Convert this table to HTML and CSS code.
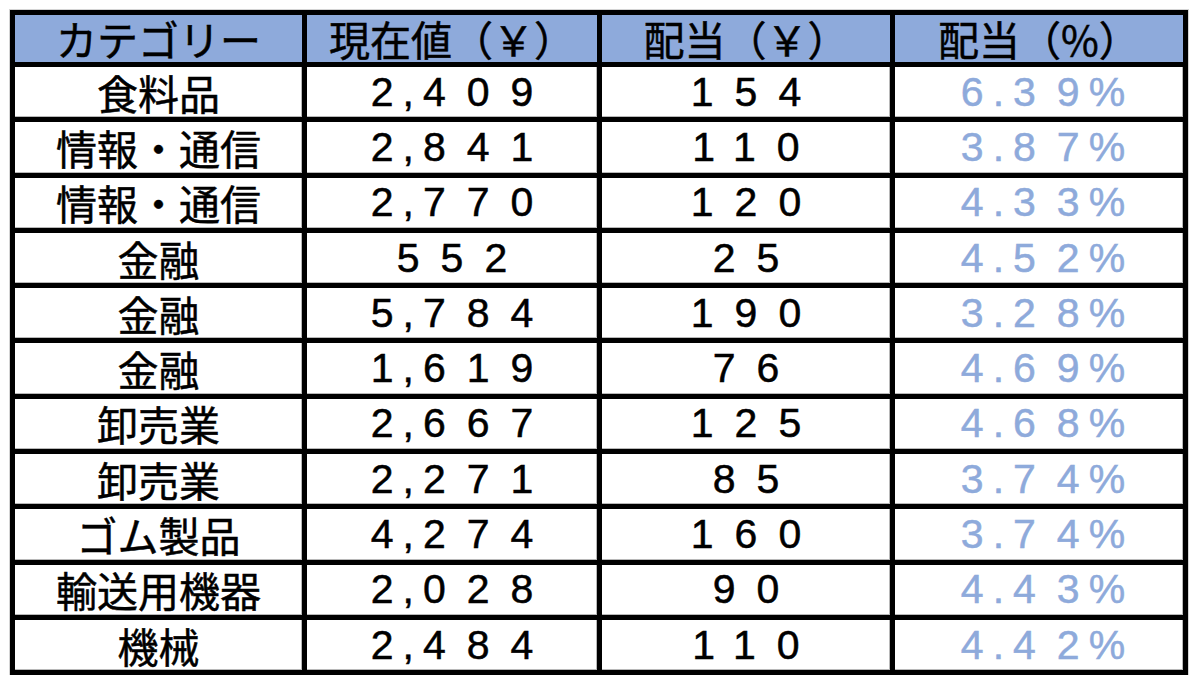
FILE: index.html
```html
<!DOCTYPE html>
<html lang="ja">
<head>
<meta charset="utf-8">
<title>配当一覧</title>
<link rel="stylesheet" href="styles.css">
</head>
<body>
<div class="sheet">
  <div class="cell head">カテゴリー</div>
  <div class="cell head">現在値（￥）</div>
  <div class="cell head">配当（￥）</div>
  <div class="cell head">配当（%）</div>

  <div class="cell cat">食料品</div>
  <div class="cell"><span class="num"><span class="t">2,</span>409</span></div>
  <div class="cell"><span class="num">154</span></div>
  <div class="cell pct"><span class="num"><span class="t">6.</span>3<span class="t">9</span>%</span></div>

  <div class="cell cat">情報・通信</div>
  <div class="cell"><span class="num"><span class="t">2,</span>841</span></div>
  <div class="cell"><span class="num">110</span></div>
  <div class="cell pct"><span class="num"><span class="t">3.</span>8<span class="t">7</span>%</span></div>

  <div class="cell cat">情報・通信</div>
  <div class="cell"><span class="num"><span class="t">2,</span>770</span></div>
  <div class="cell"><span class="num">120</span></div>
  <div class="cell pct"><span class="num"><span class="t">4.</span>3<span class="t">3</span>%</span></div>

  <div class="cell cat">金融</div>
  <div class="cell"><span class="num">552</span></div>
  <div class="cell"><span class="num">25</span></div>
  <div class="cell pct"><span class="num"><span class="t">4.</span>5<span class="t">2</span>%</span></div>

  <div class="cell cat">金融</div>
  <div class="cell"><span class="num"><span class="t">5,</span>784</span></div>
  <div class="cell"><span class="num">190</span></div>
  <div class="cell pct"><span class="num"><span class="t">3.</span>2<span class="t">8</span>%</span></div>

  <div class="cell cat">金融</div>
  <div class="cell"><span class="num"><span class="t">1,</span>619</span></div>
  <div class="cell"><span class="num">76</span></div>
  <div class="cell pct"><span class="num"><span class="t">4.</span>6<span class="t">9</span>%</span></div>

  <div class="cell cat">卸売業</div>
  <div class="cell"><span class="num"><span class="t">2,</span>667</span></div>
  <div class="cell"><span class="num">125</span></div>
  <div class="cell pct"><span class="num"><span class="t">4.</span>6<span class="t">8</span>%</span></div>

  <div class="cell cat">卸売業</div>
  <div class="cell"><span class="num"><span class="t">2,</span>271</span></div>
  <div class="cell"><span class="num">85</span></div>
  <div class="cell pct"><span class="num"><span class="t">3.</span>7<span class="t">4</span>%</span></div>

  <div class="cell cat">ゴム製品</div>
  <div class="cell"><span class="num"><span class="t">4,</span>274</span></div>
  <div class="cell"><span class="num">160</span></div>
  <div class="cell pct"><span class="num"><span class="t">3.</span>7<span class="t">4</span>%</span></div>

  <div class="cell cat">輸送用機器</div>
  <div class="cell"><span class="num"><span class="t">2,</span>028</span></div>
  <div class="cell"><span class="num">90</span></div>
  <div class="cell pct"><span class="num"><span class="t">4.</span>4<span class="t">3</span>%</span></div>

  <div class="cell cat">機械</div>
  <div class="cell"><span class="num"><span class="t">2,</span>484</span></div>
  <div class="cell"><span class="num">110</span></div>
  <div class="cell pct"><span class="num"><span class="t">4.</span>4<span class="t">2</span>%</span></div>
</div>
</body>
</html>
```

FILE: styles.css
```css
html, body {
  margin: 0;
  padding: 0;
  background: #ffffff;
}

body {
  padding: 10px 0 0 10px;
  font-family: "Liberation Sans", "Noto Sans CJK JP", sans-serif;
  font-size: 41px;
  color: #000000;
}

.sheet {
  display: grid;
  grid-template-columns: 287px 290px 288px 288px;
  grid-template-rows: 47px repeat(11, 50.3px);
  gap: 5px;
  padding: 5px;
  width: max-content;
  background: #000000;
  outline: 1px solid #d4d4d4;
}

.cell {
  display: flex;
  align-items: center;
  justify-content: center;
  background: #ffffff;
  box-shadow: inset -1px -1px 0 #b8b8b8;
  line-height: 1;
  white-space: nowrap;
  -webkit-text-stroke: 0.5px currentColor;
}

.head {
  background: #8eaadb;
  font-family: "Noto Sans CJK JP", sans-serif;
  box-shadow: none;
}

.cat {
  font-family: "Noto Sans CJK JP", sans-serif;
}

.num {
  letter-spacing: 21px;
  margin-right: -21px;
}

.num .t {
  letter-spacing: 9px;
}

.pct {
  color: #8eaadb;
  padding-left: 8px;
}
```
